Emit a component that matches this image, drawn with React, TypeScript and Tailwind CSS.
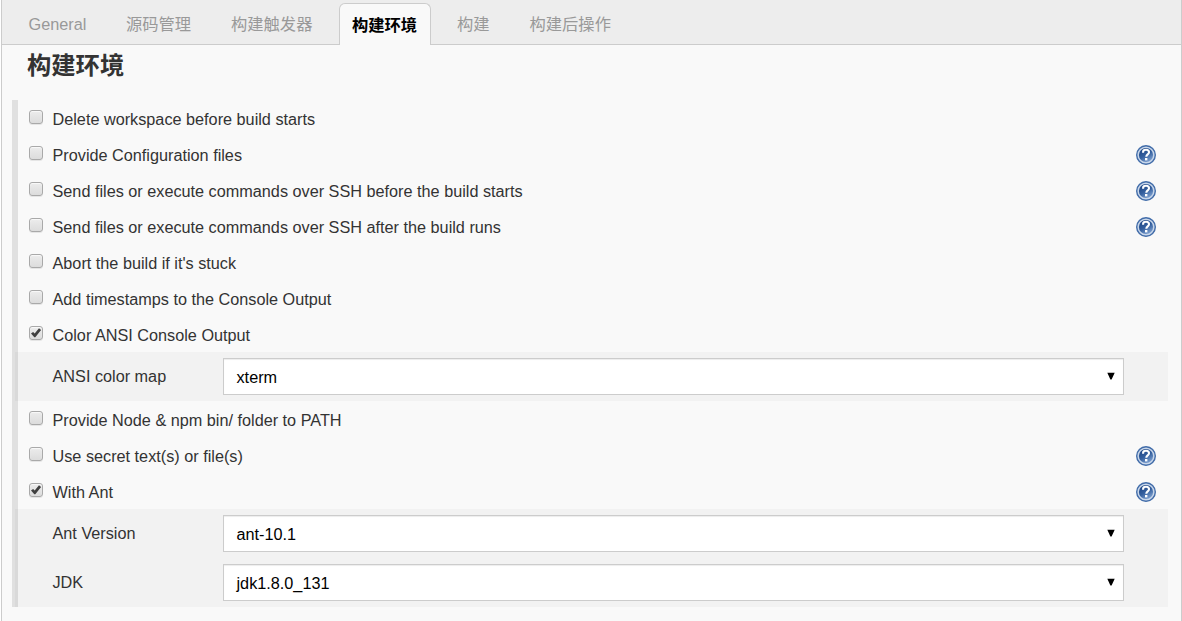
import React from "react";

const tabs = ["General", "源码管理", "构建触发器", "构建环境", "构建", "构建后操作"];
const tabWidths = ["w-[97px]", "w-[105px]", "w-[121px]", "w-[92px]", "w-[86px]", "w-[121px]"];
const tabPads = ["pl-[12.5px]", "pl-[13px]", "pl-[13px]", "pl-[12px]", "pl-[26px]", "pl-[12.5px]"];

function HelpIcon() {
  return (
    <svg width="20" height="20" viewBox="0 0 20 20">
      <defs>
        <linearGradient id="help" x1="0.2" y1="0" x2="0.8" y2="1">
          <stop offset="0" stopColor="#1d4483" />
          <stop offset="0.5" stopColor="#35609f" />
          <stop offset="1" stopColor="#86a8d6" />
        </linearGradient>
      </defs>
      <circle cx="10" cy="10" r="9.3" fill="#c9d7ea" stroke="#416ca9" strokeWidth="1.4" />
      <circle cx="10" cy="10" r="7.1" fill="url(#help)" />
      <path d="M7.1 7.7V7C7.1 5.3 8.4 4.7 10 4.7s3 .8 3 2.5c0 2.2-2.7 2.2-2.7 4.5" fill="none" stroke="#fff" strokeWidth="2.1" />
      <rect x="9" y="13" width="2.4" height="2.4" fill="#fff" />
    </svg>
  );
}

function Checkbox({ checked }: { checked?: boolean }) {
  return (
    <span
      role="checkbox"
      aria-checked={!!checked}
      className="mb-[3px] flex h-[14px] w-[14px] shrink-0 items-center justify-center rounded-[3px] border border-[#a9a9a9] bg-linear-to-b from-[#ececec] to-[#dcdcdc] shadow-[inset_0_1px_1px_rgba(255,255,255,0.7),0_1px_0_rgba(0,0,0,0.08)]"
    >
      {checked && (
        <svg width="12" height="12" viewBox="0 0 12 12" className="shrink-0">
          <path d="M1 6.4 3.1 4.9 4.7 6.6 9 1.3 11.1 2.9 5.3 10.2H4.3Z" fill="#404040" />
        </svg>
      )}
    </span>
  );
}

function Option({ label, checked, help }: { label: string; checked?: boolean; help?: boolean }) {
  return (
    <div className="flex h-9 items-center pl-[11px] pr-3">
      <Checkbox checked={checked} />
      <span className="ml-[9.5px] mt-[2px] grow whitespace-nowrap">{label}</span>
      {help && <span className="mt-[2px]"><HelpIcon /></span>}
    </div>
  );
}

function SelectRow({ label, value }: { label: string; value: string }) {
  return (
    <div className="flex h-[49px] items-center pl-[37.5px] pr-11">
      <span className="mb-[2px] w-[170.5px] shrink-0">{label}</span>
      <div className="flex h-[37px] grow items-center justify-between border border-[#ccc] bg-white pl-[12.5px] pr-2 text-black shadow-[inset_0_1px_1px_rgba(0,0,0,0.075)]">
        <span>{value}</span>
        <svg width="8" height="8" viewBox="0 0 8 8" className="mb-px">
          <path d="M.3.8H7.7L4.6 7.6H3.4Z" fill="#000" />
        </svg>
      </div>
    </div>
  );
}

function SubPanel({ children }: { children: React.ReactNode }) {
  return <div className="-ml-[3px] bg-black/[0.028]">{children}</div>;
}

export default function App() {
  return (
    <div className="h-[621px] w-[1182px] overflow-hidden bg-white pl-px font-['Liberation_Sans','Noto_Sans_CJK_SC',sans-serif] text-[16.24px] leading-6 text-[#333]">
      <div className="flex h-full flex-col border-x border-[#ccc] bg-[#f9f9f9]">
        <nav className="flex h-[45px] shrink-0 items-end border-b border-[#ccc] bg-[#ededed] pl-[14px] text-[16.3px]">
          {tabs.map((tab, i) => (
            <div
              key={tab}
              className={`${tabWidths[i]} ${tabPads[i]} whitespace-nowrap ${
                i === 3
                  ? "-mb-px h-[42px] rounded-t-[6px] border border-b-0 border-[#ccc] bg-[#f9f9f9] pt-[9px] font-bold text-black"
                  : "h-[41px] pt-[9px] text-[#999]"
              }`}
            >
              {tab}
            </div>
          ))}
        </nav>
        <h1 className="h-[55px] shrink-0 pl-[25px] pt-[3px] text-[24.3px] font-bold leading-9">构建环境</h1>
        <main className="ml-[10px] mr-[13px] border-l-[6px] border-[#e0e0e0]">
          <Option label="Delete workspace before build starts" />
          <Option label="Provide Configuration files" help />
          <Option label="Send files or execute commands over SSH before the build starts" help />
          <Option label="Send files or execute commands over SSH after the build runs" help />
          <Option label="Abort the build if it's stuck" />
          <Option label="Add timestamps to the Console Output" />
          <Option label="Color ANSI Console Output" checked />
          <SubPanel>
            <SelectRow label="ANSI color map" value="xterm" />
          </SubPanel>
          <Option label="Provide Node & npm bin/ folder to PATH" />
          <Option label="Use secret text(s) or file(s)" help />
          <Option label="With Ant" checked help />
          <SubPanel>
            <SelectRow label="Ant Version" value="ant-10.1" />
            <SelectRow label="JDK" value="jdk1.8.0_131" />
          </SubPanel>
        </main>
      </div>
    </div>
  );
}
